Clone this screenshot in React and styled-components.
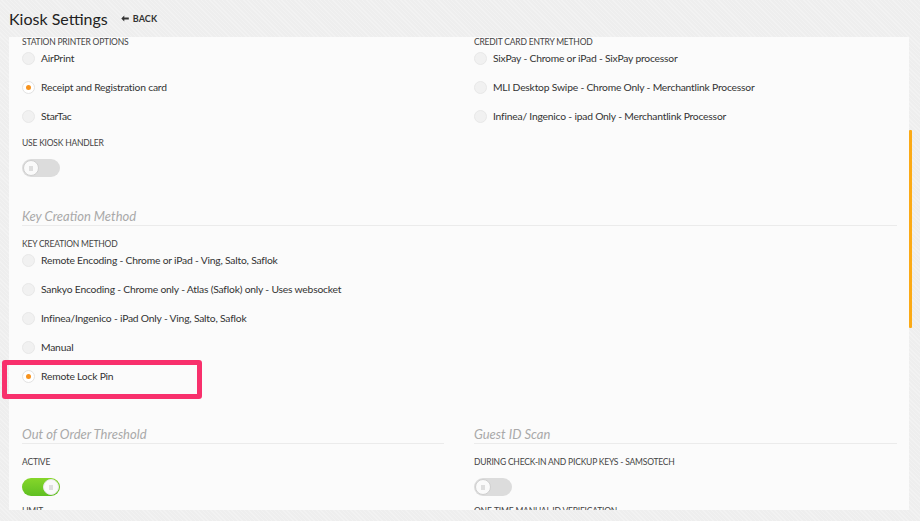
import React from "react";
import styled, { createGlobalStyle } from "styled-components";

const GlobalStyle = createGlobalStyle`
  html, body { margin: 0; padding: 0; }
  body {
    background: #eeeeee;
    font-family: Lato, "Open Sans", sans-serif;
    color: #333;
  }
`;

const Page = styled.div`
  position: relative;
  width: 920px;
  height: 521px;
  overflow: hidden;
  display: flex;
  flex-direction: column;
  background-color: #eeeeee;
  background-image: repeating-linear-gradient(45deg, rgba(255,255,255,0.25) 0 1px, transparent 1px 3px);
`;

const Header = styled.header`
  height: 37px;
  display: flex;
  align-items: center;
  padding-left: 9px;
  flex-shrink: 0;
`;

const Title = styled.h1`
  margin: 0;
  font-size: 16px;
  font-weight: 400;
  color: #222;
`;

const BackLink = styled.a`
  margin-left: 13px;
  display: flex;
  align-items: center;
  gap: 4px;
  font-size: 9px;
  font-weight: 700;
  color: #333;
  text-decoration: none;
  letter-spacing: 0.1px;
`;

const Panel = styled.main`
  margin-left: 9px;
  width: 900px;
  height: 473px;
  overflow: hidden;
  background: #fbfbfb;
  padding: 0 12px 0 13px;
  box-sizing: border-box;
  flex-shrink: 0;
`;

const Columns = styled.div`
  display: grid;
  grid-template-columns: 422px 423px;
  column-gap: 30px;
  margin-top: ${(p) => p.$mt || 0}px;
`;

const Column = styled.section`
  display: flex;
  flex-direction: column;
`;

const FieldLabel = styled.div`
  font-size: 8.5px;
  line-height: 10px;
  letter-spacing: -0.2px;
  text-transform: uppercase;
  color: #444;
  margin-top: ${(p) => p.$mt || 0}px;
  margin-bottom: 1px;
  white-space: nowrap;
`;

const RadioList = styled.div`
  display: flex;
  flex-direction: column;
  gap: 9px;
`;

const RadioRow = styled.label`
  height: 20px;
  display: flex;
  align-items: center;
  gap: 6px;
  font-size: 10.3px;
  letter-spacing: -0.2px;
  color: #333;
  white-space: nowrap;
`;

const RadioCircle = styled.span`
  width: 13px;
  height: 13px;
  border-radius: 50%;
  box-sizing: border-box;
  border: 1px solid ${(p) => (p.$checked ? "#e2e2e2" : "#e8e8e8")};
  background: ${(p) => (p.$checked ? "#ffffff" : "#f1f1f1")};
  display: flex;
  align-items: center;
  justify-content: center;
  flex-shrink: 0;
  &::after {
    content: "";
    display: ${(p) => (p.$checked ? "block" : "none")};
    width: 5px;
    height: 5px;
    border-radius: 50%;
    background: #f7931e;
  }
`;

const Toggle = styled.span`
  margin-top: 10px;
  width: 38px;
  height: 18px;
  border-radius: 9px;
  box-sizing: border-box;
  display: flex;
  align-items: center;
  justify-content: ${(p) => (p.$on ? "flex-end" : "flex-start")};
  padding: 1px;
  background: ${(p) =>
    p.$on ? "linear-gradient(180deg, #86d62a 0%, #5fbf22 100%)" : "#dcdcdc"};
`;

const Knob = styled.span`
  width: 16px;
  height: 16px;
  border-radius: 50%;
  box-sizing: border-box;
  background: #fafafa;
  border: 1px solid ${(p) => (p.$on ? "#e8e8e8" : "#cfcfcf")};
  display: flex;
  align-items: center;
  justify-content: center;
  &::after {
    content: "";
    width: 4px;
    height: 5px;
    background: #dedede;
  }
`;

const SectionTitle = styled.h2`
  margin: ${(p) => p.$mt || 0}px 0 0;
  font-size: 13px;
  line-height: 18px;
  font-style: italic;
  font-weight: 400;
  color: #a9a9a9;
  border-bottom: 1px solid #ebebeb;
`;

const Highlight = styled.div`
  position: absolute;
  left: 2px;
  top: 360px;
  width: 200px;
  height: 39px;
  box-sizing: border-box;
  border: 5px solid #f8306c;
  border-radius: 3px;
  pointer-events: none;
`;

const ScrollThumb = styled.div`
  position: absolute;
  left: 909px;
  top: 130px;
  width: 3px;
  height: 198px;
  border-radius: 1px;
  background: #fbaa16;
`;

function Radio({ label, checked }) {
  return (
    <RadioRow>
      <RadioCircle $checked={checked} />
      {label}
    </RadioRow>
  );
}

function Switch({ on }) {
  return (
    <Toggle $on={on}>
      <Knob $on={on} />
    </Toggle>
  );
}

function ArrowLeft() {
  return (
    <svg width="8" height="7" viewBox="0 0 8 7">
      <path d="M0.3 3.5 L3.3 0.6 L3.3 2.6 L7.8 2.6 L7.8 4.4 L3.3 4.4 L3.3 6.4 Z" fill="#333" />
    </svg>
  );
}

export default function App() {
  return (
    <>
      <GlobalStyle />
      <Page>
        <Header>
          <Title>Kiosk Settings</Title>
          <BackLink href="#">
            <ArrowLeft />
            BACK
          </BackLink>
        </Header>
        <Panel>
          <Columns>
            <Column>
              <FieldLabel>Station Printer Options</FieldLabel>
              <RadioList>
                <Radio label="AirPrint" />
                <Radio label="Receipt and Registration card" checked />
                <Radio label="StarTac" />
              </RadioList>
              <FieldLabel $mt={12}>Use Kiosk Handler</FieldLabel>
              <Switch />
            </Column>
            <Column>
              <FieldLabel>Credit Card Entry Method</FieldLabel>
              <RadioList>
                <Radio label="SixPay - Chrome or iPad - SixPay processor" />
                <Radio label="MLI Desktop Swipe - Chrome Only - Merchantlink Processor" />
                <Radio label="Infinea/ Ingenico - ipad Only - Merchantlink Processor" />
              </RadioList>
            </Column>
          </Columns>

          <SectionTitle $mt={30}>Key Creation Method</SectionTitle>
          <FieldLabel $mt={13}>Key Creation Method</FieldLabel>
          <RadioList>
            <Radio label="Remote Encoding - Chrome or iPad - Ving, Salto, Saflok" />
            <Radio label="Sankyo Encoding - Chrome only - Atlas (Saflok) only - Uses websocket" />
            <Radio label="Infinea/Ingenico - iPad Only - Ving, Salto, Saflok" />
            <Radio label="Manual" />
            <Radio label="Remote Lock Pin" checked />
          </RadioList>

          <Columns $mt={39}>
            <Column>
              <SectionTitle>Out of Order Threshold</SectionTitle>
              <FieldLabel $mt={13}>Active</FieldLabel>
              <Switch on />
              <FieldLabel $mt={10}>Limit</FieldLabel>
            </Column>
            <Column>
              <SectionTitle>Guest ID Scan</SectionTitle>
              <FieldLabel $mt={13}>During Check-in and Pickup Keys - Samsotech</FieldLabel>
              <Switch />
              <FieldLabel $mt={10}>One-time Manual ID Verification</FieldLabel>
            </Column>
          </Columns>
        </Panel>
        <Highlight />
        <ScrollThumb />
      </Page>
    </>
  );
}
